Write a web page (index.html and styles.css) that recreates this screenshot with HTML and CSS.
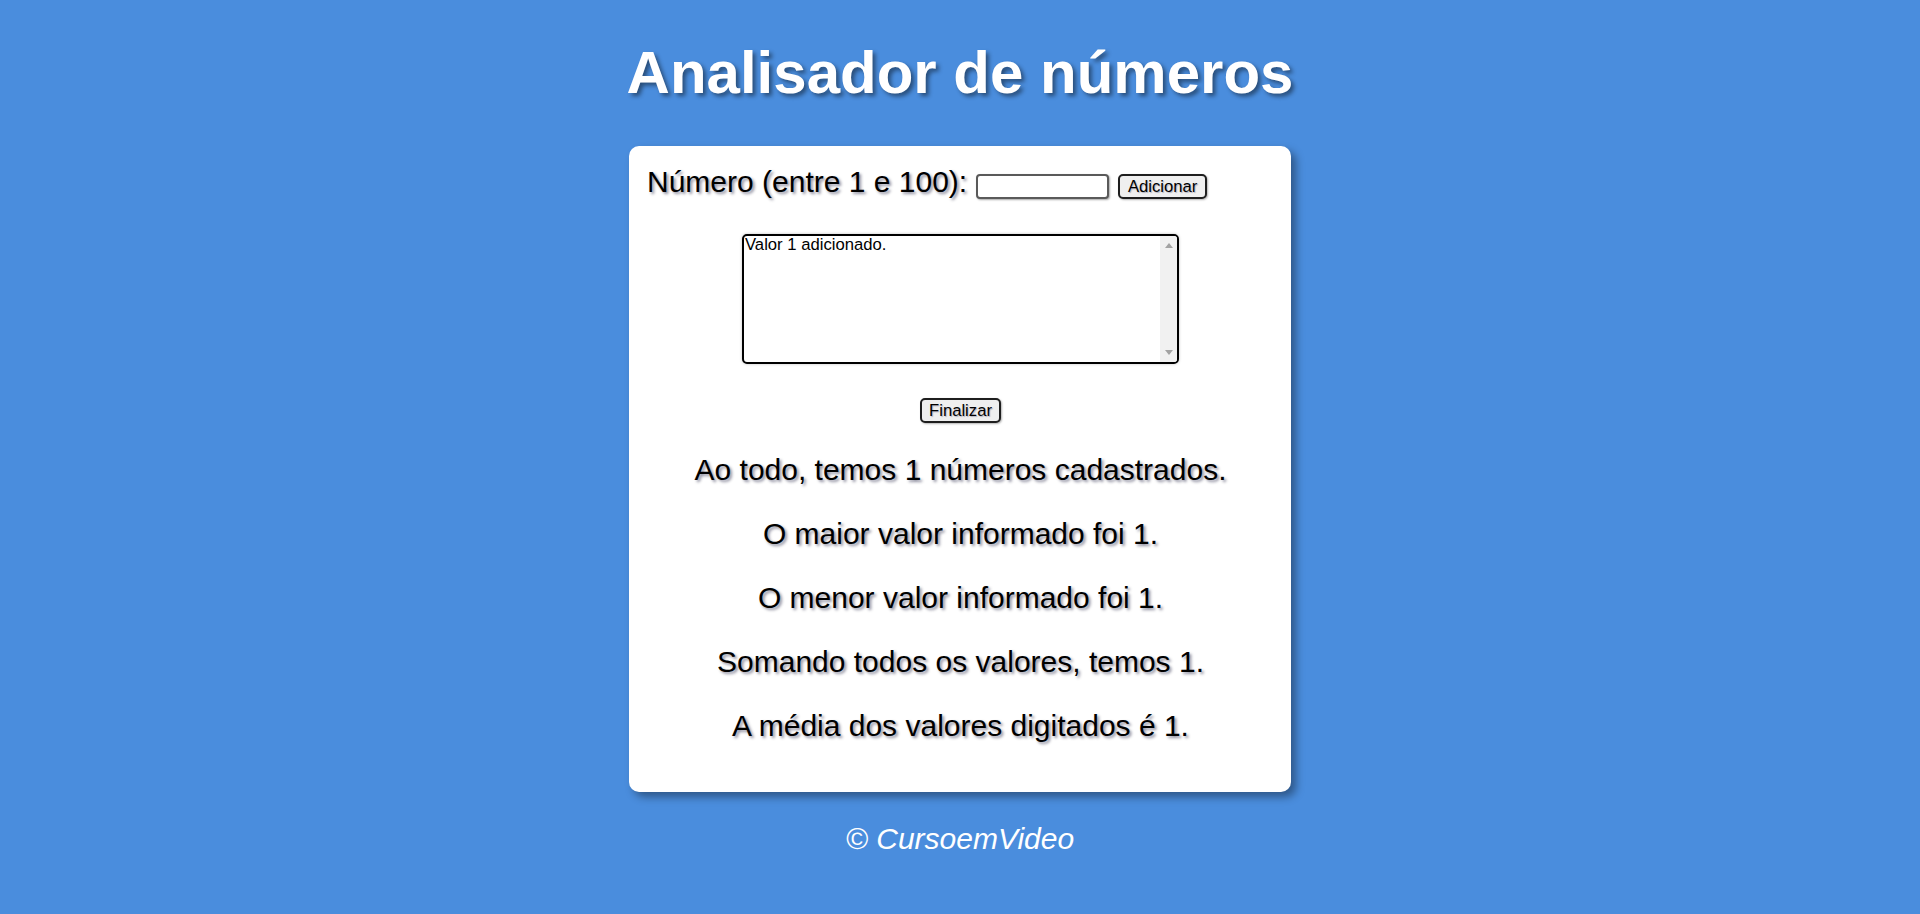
FILE: index.html
```html
<!DOCTYPE html>
<html lang="pt-BR">
<head>
<meta charset="utf-8">
<title>Analisador de números</title>
<link rel="stylesheet" href="styles.css">
</head>
<body>
<header class="top">
  <h1 class="title">Analisador de números</h1>
</header>
<section class="card">
  <div class="entry">
    <label class="entry-label" for="num">Número (entre 1 e 100):</label>
    <input class="num-input" id="num" type="number">
    <button class="btn btn-add" type="button">Adicionar</button>
  </div>
  <div class="listbox">
    <div class="listbox-text">Valor 1 adicionado.</div>
    <div class="scrollbar">
      <span class="arrow arrow-up"></span>
      <span class="arrow arrow-down"></span>
    </div>
  </div>
  <div class="finish">
    <button class="btn btn-finish" type="button">Finalizar</button>
  </div>
  <div class="results">
    <p class="result">Ao todo, temos 1 números cadastrados.</p>
    <p class="result">O maior valor informado foi 1.</p>
    <p class="result">O menor valor informado foi 1.</p>
    <p class="result">Somando todos os valores, temos 1.</p>
    <p class="result">A média dos valores digitados é 1.</p>
  </div>
</section>
<footer class="footer">
  <p class="footer-text">© CursoemVideo</p>
</footer>
</body>
</html>
```
FILE: styles.css
```css
* { box-sizing: border-box; }

html, body {
  margin: 0;
  padding: 0;
}

body {
  background: #4a8ddd;
  font-family: "Liberation Sans", Arial, sans-serif;
  color: #000;
  min-height: 914px;
}

.top {
  padding-top: 38px;
}

.title {
  margin: 0;
  text-align: center;
  font-size: 60px;
  line-height: 69px;
  font-weight: bold;
  color: #fff;
  text-shadow: 3px 3px 4px rgba(0, 0, 0, 0.45);
}

.card {
  width: 662px;
  margin: 39px auto 0;
  background: #fff;
  border-radius: 10px;
  padding: 17px 17px 19px 18px;
  box-shadow: 5px 5px 9px rgba(0, 0, 0, 0.38);
}

.entry {
  display: flex;
  align-items: flex-start;
  height: 34px;
  font-size: 30px;
  line-height: 34px;
}

.entry-label {
  padding-top: 2px;
  text-shadow: 2px 2px 3px rgba(0, 0, 40, 0.45);
}

.num-input {
  margin: 11px 0 0 9px;
  width: 133px;
  height: 25px;
  border: 2px solid #5a5a5a;
  border-radius: 4px;
  background: #fff;
  box-shadow: 1px 1px 2px rgba(0, 0, 0, 0.35);
  padding: 1px 3px;
  font-size: 16.67px;
  font-family: "Liberation Sans", Arial, sans-serif;
  -moz-appearance: textfield;
  appearance: textfield;
}

.num-input::-webkit-inner-spin-button,
.num-input::-webkit-outer-spin-button {
  -webkit-appearance: none;
  margin: 0;
}

.btn {
  height: 25px;
  padding: 0 6px;
  border: 2px solid #1e1e1e;
  border-radius: 5px;
  background: #efefef;
  color: #000;
  font-family: "Liberation Sans", Arial, sans-serif;
  font-size: 16.67px;
  line-height: 19px;
  box-shadow: 1px 1px 2px rgba(0, 0, 0, 0.3);
  text-shadow: 1px 1px 1px rgba(0, 0, 60, 0.25);
}

.btn-add {
  margin: 11px 0 0 9px;
  width: 89px;
}

.listbox {
  display: flex;
  width: 437px;
  height: 130px;
  margin: 37px auto 0;
  border: 2px solid #000;
  border-radius: 5px;
  background: #fff;
  box-shadow: 0 0 3px rgba(0, 0, 0, 0.25);
  overflow: hidden;
}

.listbox-text {
  flex: 1;
  padding: 0 1px;
  font-size: 16.67px;
  line-height: 18px;
  color: #000;
}

.scrollbar {
  width: 17px;
  background: #f1f1f1;
  display: flex;
  flex-direction: column;
  justify-content: space-between;
  align-items: center;
  padding: 7px 0 7px;
}

.arrow {
  width: 0;
  height: 0;
  border-left: 4px solid transparent;
  border-right: 4px solid transparent;
}

.arrow-up {
  border-bottom: 5px solid #a3a3a3;
}

.arrow-down {
  border-top: 5px solid #a3a3a3;
}

.finish {
  display: flex;
  justify-content: center;
  margin-top: 34px;
}

.btn-finish {
  width: 81px;
}

.results {
  text-align: center;
}

.result {
  margin: 30px 0;
  font-size: 30px;
  line-height: 34px;
  text-shadow: 2px 2px 3px rgba(0, 0, 40, 0.45);
}

.footer {
  text-align: center;
}

.footer-text {
  margin: 30px 0 0;
  font-size: 30px;
  line-height: 34px;
  font-style: italic;
  color: #fff;
}
```
